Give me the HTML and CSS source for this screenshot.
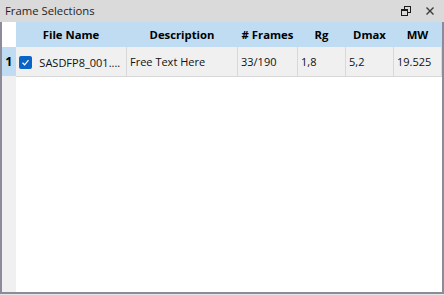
FILE: index.html
```html
<!DOCTYPE html>
<html lang="en">
<head>
    <meta charset="UTF-8">
    <title>Frame Selections</title>
    <link rel="stylesheet" href="styles.css">
</head>
<body>
    <!-- 패널 -->
    <div class="panel">
        <div class="title-bar">
            <span class="title">Frame Selections</span>
            <div class="title-buttons">
                <svg class="btn-icon" width="10" height="10" viewBox="0 0 10 10">
                    <rect x="3.5" y="0.5" width="6" height="6" fill="none" stroke="#1a1a1a" stroke-width="1"/>
                    <rect x="0.5" y="3.5" width="6" height="6" fill="#dadada" stroke="#1a1a1a" stroke-width="1"/>
                    <line x1="0.5" y1="4.5" x2="6.5" y2="4.5" stroke="#1a1a1a" stroke-width="1"/>
                </svg>
                <svg class="btn-icon" width="8" height="8" viewBox="0 0 8 8">
                    <path d="M0.5 0.5 L7.5 7.5 M7.5 0.5 L0.5 7.5" stroke="#3a3a3a" stroke-width="1.4"/>
                </svg>
            </div>
        </div>

        <!-- 그리드 -->
        <div class="grid-frame">
            <div class="row-headers">
                <div class="corner"></div>
                <div class="row-num">1</div>
                <div class="row-rest"></div>
            </div>
            <div class="grid-body">
                <table class="grid">
                    <colgroup>
                        <col class="c-file">
                        <col class="c-desc">
                        <col class="c-frames">
                        <col class="c-rg">
                        <col class="c-dmax">
                        <col class="c-mw">
                    </colgroup>
                    <thead>
                        <tr>
                            <th>File Name</th>
                            <th>Description</th>
                            <th># Frames</th>
                            <th>Rg</th>
                            <th>Dmax</th>
                            <th>MW</th>
                        </tr>
                    </thead>
                    <tbody>
                        <tr>
                            <td class="file-cell">
                                <span class="check">
                                    <svg width="9" height="9" viewBox="0 0 9 9">
                                        <path d="M1.5 4.8 L3.6 6.8 L7.5 2.2" fill="none" stroke="#fff" stroke-width="1.2"/>
                                    </svg>
                                </span>
                                <span class="file-name">SASDFP8_001....</span>
                            </td>
                            <td>Free Text Here</td>
                            <td>33/190</td>
                            <td>1,8</td>
                            <td>5,2</td>
                            <td>19.525</td>
                        </tr>
                    </tbody>
                </table>
            </div>
        </div>
    </div>
</body>
</html>
```

FILE: styles.css
```css
/* 기본 스타일 */
* {
    margin: 0;
    padding: 0;
    box-sizing: border-box;
}

body {
    width: 444px;
    height: 295px;
    background-color: #e6e6e6;
    font-family: "Open Sans", "Noto Sans", sans-serif;
    font-size: 11px;
    color: #1a1a1a;
    overflow: hidden;
}

.panel {
    display: flex;
    flex-direction: column;
    height: 294px;
}

/* 타이틀 바 */
.title-bar {
    height: 22px;
    background-color: #dadada;
    display: flex;
    align-items: center;
    justify-content: space-between;
    padding: 0 10px 0 5px;
}

.title {
    font-size: 11.3px;
    color: #1e1e1e;
    line-height: 1;
}

.title-buttons {
    display: flex;
    gap: 15px;
    align-items: center;
}

.btn-icon {
    display: block;
}

/* 그리드 프레임 */
.grid-frame {
    flex: 1;
    display: flex;
    background-color: #ffffff;
    border: 2px solid #8b8b99;
    border-top: none;
}

.row-headers {
    width: 14px;
    display: flex;
    flex-direction: column;
}

.corner {
    height: 25px;
    background-color: #ffffff;
}

.row-num {
    height: 29px;
    background-color: #bfdcf3;
    font-weight: bold;
    font-size: 12.5px;
    display: flex;
    align-items: center;
    justify-content: center;
    color: #000;
}

.row-rest {
    flex: 1;
    background-color: #f0f0f0;
}

.grid-body {
    flex: 1;
}

.grid {
    border-collapse: collapse;
    table-layout: fixed;
    width: 426px;
}

.c-file { width: 111px; }
.c-desc { width: 111px; }
.c-frames { width: 60px; }
.c-rg { width: 48px; }
.c-dmax { width: 48px; }
.c-mw { width: 48px; }

.grid th {
    height: 25px;
    background-color: #bfdcf3;
    font-weight: bold;
    font-size: 11.3px;
    color: #000;
    text-align: center;
    white-space: nowrap;
}

.grid td {
    height: 29px;
    background-color: #f0f0f0;
    border-right: 1px solid #d8d8d8;
    border-bottom: 1px solid #d8d8d8;
    padding: 0 3px;
    white-space: nowrap;
    overflow: hidden;
    color: #111;
}

.file-cell {
    padding-left: 4px;
}

.file-cell .check,
.file-cell .file-name {
    vertical-align: middle;
}

.check {
    display: inline-flex;
    align-items: center;
    justify-content: center;
    width: 13px;
    height: 13px;
    background-color: #0a64c8;
    border-radius: 2px;
    margin-right: 5px;
}
```
